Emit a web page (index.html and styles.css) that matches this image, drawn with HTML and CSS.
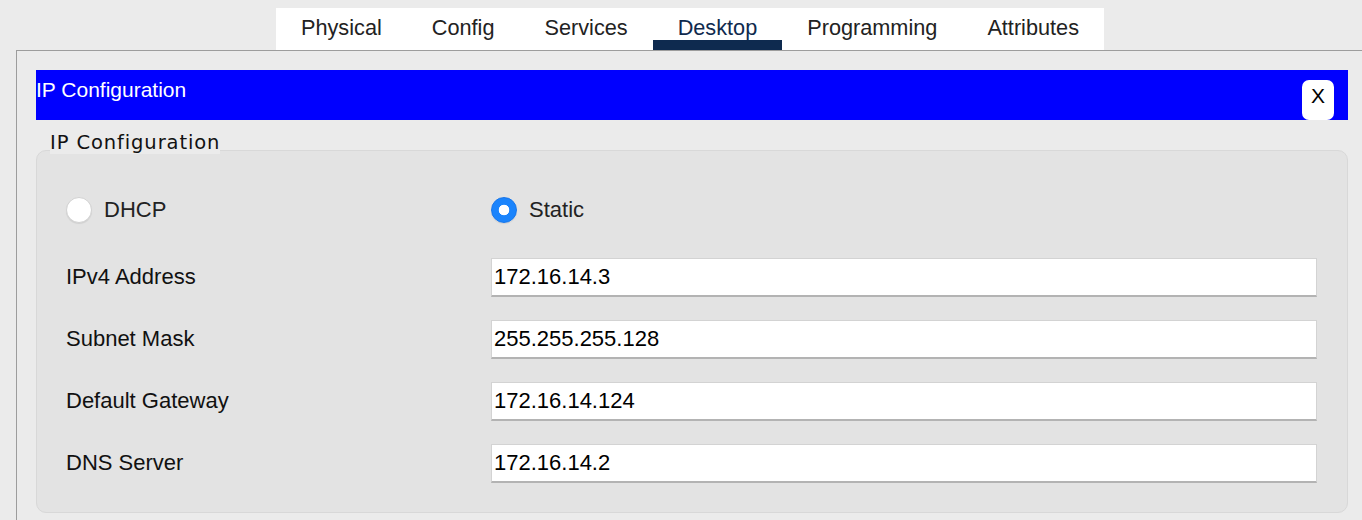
FILE: index.html
```html
<!DOCTYPE html>
<html>
<head>
<meta charset="utf-8">
<title>IP Configuration</title>
<link rel="stylesheet" href="styles.css">
</head>
<body>
<div class="tabbar">
  <div class="tabs">
    <div class="tab">Physical</div>
    <div class="tab">Config</div>
    <div class="tab">Services</div>
    <div class="tab active">Desktop</div>
    <div class="tab">Programming</div>
    <div class="tab">Attributes</div>
  </div>
</div>
<div class="panel">
  <div class="titlebar">
    <div class="title">IP Configuration</div>
    <div class="close">X</div>
  </div>
  <div class="legend">IP Configuration</div>
  <div class="group">
    <label class="radio"><input type="radio" name="mode"><span>DHCP</span></label>
    <label class="radio"><input type="radio" name="mode" checked><span>Static</span></label>
    <div class="label">IPv4 Address</div>
    <input class="field" type="text" value="172.16.14.3">
    <div class="label">Subnet Mask</div>
    <input class="field" type="text" value="255.255.255.128">
    <div class="label">Default Gateway</div>
    <input class="field" type="text" value="172.16.14.124">
    <div class="label">DNS Server</div>
    <input class="field" type="text" value="172.16.14.2">
  </div>
</div>
</body>
</html>
```
FILE: styles.css
```css
html, body {
  margin: 0;
  background: #ebebeb;
  font-family: "Liberation Sans", Arial, sans-serif;
}

.tabbar {
  display: flex;
  padding: 8px 0 0 276px;
}

.tabs {
  display: flex;
  background: #ffffff;
}

.tab {
  padding: 7px 25px 0;
  line-height: 25px;
  font-size: 21.7px;
  color: #222222;
  border-bottom: 10px solid transparent;
}

.tab.active {
  color: #0f2a4e;
  border-bottom-color: #0e2a4f;
}

.panel {
  margin-left: 16px;
  border-top: 1px solid #9c9c9c;
  border-left: 1px solid #9c9c9c;
  padding: 19px 14px 20px 19px;
  display: flex;
  flex-direction: column;
}

.titlebar {
  height: 50px;
  background: #0000ff;
  color: #ffffff;
  display: flex;
  justify-content: space-between;
}

.title {
  font-size: 21px;
  line-height: 24px;
  padding-top: 8px;
}

.close {
  align-self: flex-end;
  box-sizing: border-box;
  width: 32px;
  height: 40px;
  margin-right: 14px;
  padding-top: 4px;
  background: #ffffff;
  border-radius: 7px;
  color: #000000;
  font-size: 21px;
  line-height: 24px;
  text-align: center;
}

.legend {
  align-self: flex-start;
  margin: 11px 0 -4px 14px;
  position: relative;
  z-index: 1;
  background: #ebebeb;
  font-family: "DejaVu Sans", Verdana, sans-serif;
  font-size: 19.5px;
  letter-spacing: 0.9px;
  line-height: 23px;
  color: #111111;
}

.group {
  background: #e3e3e3;
  border: 1px solid #d8d8d8;
  border-radius: 10px;
  padding: 39px 30px 29px 29px;
  display: grid;
  grid-template-columns: 425px 1fr;
  grid-template-rows: 45px repeat(4, 39px);
  row-gap: 23px;
}

.radio {
  align-self: start;
  height: 40px;
  display: flex;
  align-items: center;
  gap: 12px;
  font-size: 22px;
  color: #222222;
}

.radio input {
  appearance: none;
  -webkit-appearance: none;
  margin: 0;
  width: 26px;
  height: 26px;
  border-radius: 50%;
  box-sizing: border-box;
  background: #ffffff;
  border: 1px solid #d2d2d2;
  box-shadow: 0 1px 1px rgba(0, 0, 0, 0.08);
}

.radio input:checked {
  border: 1px solid #1675ea;
  background: radial-gradient(circle, #ffffff 0 5px, #1b84fc 5.6px);
}

.label {
  align-self: center;
  padding-bottom: 2px;
  font-size: 22px;
  color: #111111;
}

.field {
  box-sizing: border-box;
  height: 39px;
  margin: 0;
  padding: 0 2px;
  border: 1px solid #d3d3d3;
  border-bottom: 2px solid #b3b3b3;
  background: #ffffff;
  font-family: "Liberation Sans", Arial, sans-serif;
  font-size: 22px;
  color: #000000;
  outline: none;
}
```
